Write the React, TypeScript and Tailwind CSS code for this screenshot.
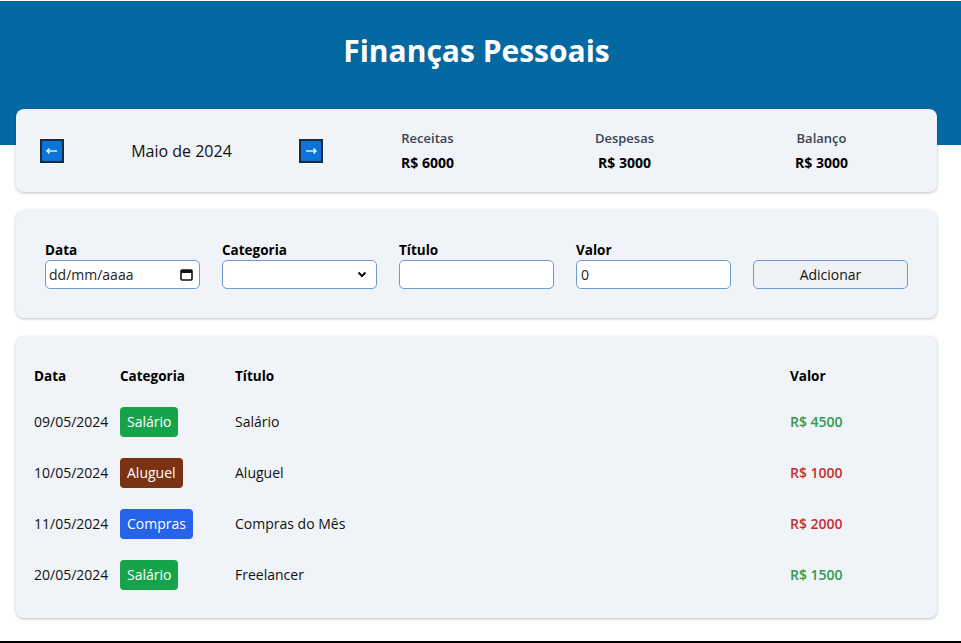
const transactions = [
  { date: "09/05/2024", category: "Salário", badge: "bg-[#16a34a]", title: "Salário", value: "R$ 4500", color: "text-[#2f9a4e]" },
  { date: "10/05/2024", category: "Aluguel", badge: "bg-[#7a3213]", title: "Aluguel", value: "R$ 1000", color: "text-[#c62f2f]" },
  { date: "11/05/2024", category: "Compras", badge: "bg-[#2563eb]", title: "Compras do Mês", value: "R$ 2000", color: "text-[#c62f2f]" },
  { date: "20/05/2024", category: "Salário", badge: "bg-[#16a34a]", title: "Freelancer", value: "R$ 1500", color: "text-[#2f9a4e]" },
];

function ArrowButton({ dir }: { dir: "left" | "right" }) {
  return (
    <button className="w-6 h-6 flex items-center justify-center bg-[#0b74d6] border-2 border-[#1c2a3f] text-white">
      <svg width="12" height="8" viewBox="0 0 12 8" fill="none" stroke="white" strokeWidth="1.3">
        {dir === "left" ? (
          <>
            <path d="M1 4h10" />
            <path d="M3.5 1.5L1 4l2.5 2.5" />
          </>
        ) : (
          <>
            <path d="M1 4h10" />
            <path d="M8.5 1.5L11 4 8.5 6.5" />
          </>
        )}
      </svg>
    </button>
  );
}

function Stat({ label, value }: { label: string; value: string }) {
  return (
    <div className="flex flex-col items-center">
      <span className="text-[13px] leading-[18px] font-semibold text-[#3b4252]">{label}</span>
      <span className="mt-[7px] text-[14px] leading-[18px] font-bold text-black">{value}</span>
    </div>
  );
}

export default function App() {
  return (
    <div className="h-[643px] flex flex-col bg-white border-t border-white border-b-2 border-b-black font-['Segoe_UI','Open_Sans',sans-serif] overflow-hidden">
      {/* Header */}
      <header className="h-[144px] bg-[#0469a2] pt-8">
        <h1 className="text-center text-white text-[30px] leading-[36px] font-bold -ml-[8px]">Finanças Pessoais</h1>
      </header>

      <main className="-mt-9 pl-4 pr-6 flex-1">
        {/* Month + summary */}
        <div className="h-[83px] rounded-lg bg-[#f0f3f8] shadow-[0_1px_3px_rgba(0,0,0,0.25)] flex items-center pl-6 pr-[17px]">
          <div className="w-[283px] flex items-center">
            <ArrowButton dir="left" />
            <span className="flex-1 text-center text-[16px] text-[#111]">Maio de 2024</span>
            <ArrowButton dir="right" />
          </div>
          <div className="ml-[6px] flex-1 grid grid-cols-3">
            <Stat label="Receitas" value="R$ 6000" />
            <Stat label="Despesas" value="R$ 3000" />
            <Stat label="Balanço" value="R$ 3000" />
          </div>
        </div>

        {/* Form */}
        <div className="mt-[18px] rounded-lg bg-[#f0f3f8] shadow-[0_1px_3px_rgba(0,0,0,0.25)] pt-[31px] pb-[29px] px-[29px] grid grid-cols-5 gap-[22px] items-end">
          <label className="flex flex-col">
            <span className="text-[13.5px] leading-[18px] font-bold text-black mb-px">Data</span>
            <div className="h-[29px] bg-white border border-[#6b9bd1] rounded-[5px] flex items-center justify-between pl-[3px] pr-[6px]">
              <span className="text-[14px] text-[#222]">dd/mm/aaaa</span>
              <svg width="13" height="13" viewBox="0 0 13 13">
                <rect x="1" y="2" width="11" height="10" rx="1" fill="none" stroke="#111" strokeWidth="1.6" />
                <rect x="1" y="2" width="11" height="3" fill="#111" />
              </svg>
            </div>
          </label>
          <label className="flex flex-col">
            <span className="text-[13.5px] leading-[18px] font-bold text-black mb-px">Categoria</span>
            <div className="h-[29px] bg-white border border-[#6b9bd1] rounded-[5px] flex items-center justify-end pr-[9px]">
              <svg width="10" height="7" viewBox="0 0 10 7" fill="none" stroke="#111" strokeWidth="2">
                <path d="M1.5 1.5L5 5l3.5-3.5" />
              </svg>
            </div>
          </label>
          <label className="flex flex-col">
            <span className="text-[13.5px] leading-[18px] font-bold text-black mb-px">Título</span>
            <input className="h-[29px] bg-white border border-[#6b9bd1] rounded-[5px] px-[4px] text-[14px] outline-none" />
          </label>
          <label className="flex flex-col">
            <span className="text-[13.5px] leading-[18px] font-bold text-black mb-px">Valor</span>
            <input defaultValue="0" className="h-[29px] bg-white border border-[#6b9bd1] rounded-[5px] px-[4px] text-[14px] text-[#222] outline-none" />
          </label>
          <button className="h-[29px] border border-[#6b9bd1] rounded-[5px] bg-[#eef2f7] text-[14px] text-[#111]">Adicionar</button>
        </div>

        {/* Table */}
        <div className="mt-[18px] rounded-lg bg-[#f0f3f8] shadow-[0_1px_3px_rgba(0,0,0,0.25)] pt-[25px] pb-[18px] px-[18px]">
          <div className="h-[30px] grid grid-cols-[86px_115px_555px_1fr] items-center text-[13.5px] font-bold text-black">
            <span>Data</span>
            <span>Categoria</span>
            <span>Título</span>
            <span>Valor</span>
          </div>
          <div className="mt-[5px]">
            {transactions.map((t, i) => (
              <div key={i} className="h-[51px] grid grid-cols-[86px_115px_555px_1fr] items-center text-[14px] text-[#111]">
                <span>{t.date}</span>
                <span>
                  <span className={`inline-flex items-center h-[30px] px-[7px] rounded-[4px] text-white text-[14px] ${t.badge}`}>{t.category}</span>
                </span>
                <span>{t.title}</span>
                <span className={`font-semibold ${t.color}`}>{t.value}</span>
              </div>
            ))}
          </div>
        </div>
      </main>
    </div>
  );
}
